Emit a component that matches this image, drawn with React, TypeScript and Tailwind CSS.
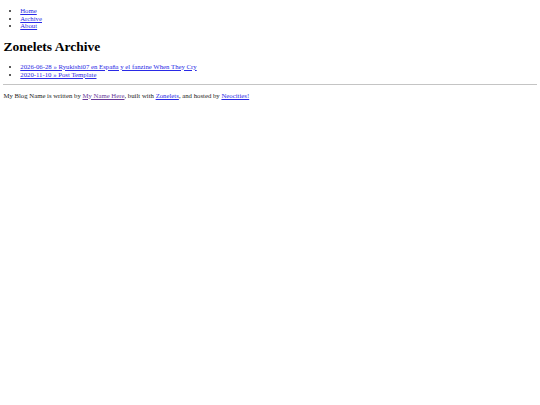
const NAV = ['Home', 'Archive', 'About'];

const POSTS = [
  '2026-06-28 » Ryukishi07 en España y el fanzine When They Cry',
  '2020-11-10 » Post Template',
];

export default function App() {
  return (
    <div className="min-h-[405px] bg-white px-[3.375px] font-['Liberation_Serif',serif] text-[6.75px] leading-[7.75px] text-[#222]">
      {/* header nav */}
      <ul className="mt-[6.75px] mb-[6.75px] list-disc pl-[16.875px]">
        {NAV.map((item) => (
          <li key={item}>
            <a href="#" className="text-[#2a2ae6] underline">
              {item}
            </a>
          </li>
        ))}
      </ul>

      <h1 className="mt-[9.05px] mb-[8.3px] text-[13.5px] font-bold leading-[15.5px] text-black">Zonelets Archive</h1>

      {/* post list */}
      <ul className="mt-[6.75px] mb-[6px] list-disc pl-[16.875px]">
        {POSTS.map((post) => (
          <li key={post}>
            <a href="#" className="text-[#2a2ae6] underline">
              {post}
            </a>
          </li>
        ))}
      </ul>

      <hr className="my-[3.375px] border-t border-[#c4c4c4]" />

      {/* footer */}
      <p className="my-[6.5px]">
        My Blog Name is written by{' '}
        <a href="#" className="text-[#6a3a9a] underline">
          My Name Here
        </a>
        , built with{' '}
        <a href="#" className="text-[#2a2ae6] underline">
          Zonelets
        </a>
        , and hosted by{' '}
        <a href="#" className="text-[#2a2ae6] underline">
          Neocities!
        </a>
      </p>
    </div>
  );
}
